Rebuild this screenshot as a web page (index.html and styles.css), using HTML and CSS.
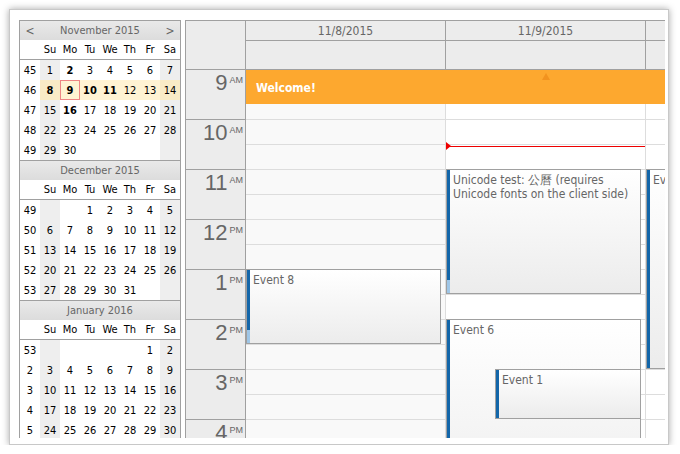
FILE: index.html
```html
<!DOCTYPE html>
<html>
<head>
<meta charset="utf-8">
<link rel="stylesheet" href="styles.css">
</head>
<body>
<div class="frame">
  <div class="viewport">
    <div class="nav">
      <div class="month">
        <div class="mhead"><span class="arrow">&lt;</span><span class="title">November 2015</span><span class="arrow">&gt;</span></div>
        <div class="dnames"><span></span><span>Su</span><span>Mo</span><span>Tu</span><span>We</span><span>Th</span><span>Fr</span><span>Sa</span></div>
        <div class="days">
          <span class="wk">45</span><span class="we">1</span><span class="b">2</span><span>3</span><span>4</span><span>5</span><span>6</span><span class="we">7</span>
          <span class="wk">46</span><span class="selwe b">8</span><span class="sel b today">9</span><span class="sel b">10</span><span class="sel b">11</span><span class="sel">12</span><span class="sel">13</span><span class="selwe">14</span>
          <span class="wk">47</span><span class="we">15</span><span class="b">16</span><span>17</span><span>18</span><span>19</span><span>20</span><span class="we">21</span>
          <span class="wk">48</span><span class="we">22</span><span>23</span><span>24</span><span>25</span><span>26</span><span>27</span><span class="we">28</span>
          <span class="wk">49</span><span class="we">29</span><span>30</span><span></span><span></span><span></span><span></span><span class="we"></span>
        </div>
      </div>
      <div class="month">
        <div class="mhead"><span class="arrow"></span><span class="title">December 2015</span><span class="arrow"></span></div>
        <div class="dnames"><span></span><span>Su</span><span>Mo</span><span>Tu</span><span>We</span><span>Th</span><span>Fr</span><span>Sa</span></div>
        <div class="days">
          <span class="wk">49</span><span class="we"></span><span></span><span>1</span><span>2</span><span>3</span><span>4</span><span class="we">5</span>
          <span class="wk">50</span><span class="we">6</span><span>7</span><span>8</span><span>9</span><span>10</span><span>11</span><span class="we">12</span>
          <span class="wk">51</span><span class="we">13</span><span>14</span><span>15</span><span>16</span><span>17</span><span>18</span><span class="we">19</span>
          <span class="wk">52</span><span class="we">20</span><span>21</span><span>22</span><span>23</span><span>24</span><span>25</span><span class="we">26</span>
          <span class="wk">53</span><span class="we">27</span><span>28</span><span>29</span><span>30</span><span>31</span><span></span><span class="we"></span>
        </div>
      </div>
      <div class="month">
        <div class="mhead"><span class="arrow"></span><span class="title">January 2016</span><span class="arrow"></span></div>
        <div class="dnames"><span></span><span>Su</span><span>Mo</span><span>Tu</span><span>We</span><span>Th</span><span>Fr</span><span>Sa</span></div>
        <div class="days">
          <span class="wk">53</span><span class="we"></span><span></span><span></span><span></span><span></span><span>1</span><span class="we">2</span>
          <span class="wk">2</span><span class="we">3</span><span>4</span><span>5</span><span>6</span><span>7</span><span>8</span><span class="we">9</span>
          <span class="wk">3</span><span class="we">10</span><span>11</span><span>12</span><span>13</span><span>14</span><span>15</span><span class="we">16</span>
          <span class="wk">4</span><span class="we">17</span><span>18</span><span>19</span><span>20</span><span>21</span><span>22</span><span class="we">23</span>
          <span class="wk">5</span><span class="we">24</span><span>25</span><span>26</span><span>27</span><span>28</span><span>29</span><span class="we">30</span>
        </div>
      </div>
    </div>

    <div class="cal">
      <div class="chead">
        <div class="corner"></div>
        <div class="dhead"><div class="date">11/8/2015</div><div class="allday"></div></div>
        <div class="dhead"><div class="date">11/9/2015</div><div class="allday"></div></div>
        <div class="dhead"><div class="date"></div><div class="allday"></div></div>
      </div>
      <div class="cbody">
        <div class="hours">
          <div class="hour"><span class="n">9</span><span class="ap">AM</span></div>
          <div class="hour"><span class="n">10</span><span class="ap">AM</span></div>
          <div class="hour"><span class="n">11</span><span class="ap">AM</span></div>
          <div class="hour"><span class="n">12</span><span class="ap">PM</span></div>
          <div class="hour"><span class="n">1</span><span class="ap">PM</span></div>
          <div class="hour"><span class="n">2</span><span class="ap">PM</span></div>
          <div class="hour"><span class="n">3</span><span class="ap">PM</span></div>
          <div class="hour"><span class="n">4</span><span class="ap">PM</span></div>
        </div>
        <div class="day nb">
          <div class="cell"></div><div class="cell"></div><div class="cell"></div><div class="cell"></div>
          <div class="cell"></div><div class="cell"></div><div class="cell"></div><div class="cell"></div>
          <div class="cell"></div><div class="cell"></div><div class="cell"></div><div class="cell"></div>
          <div class="cell"></div><div class="cell"></div><div class="cell"></div><div class="cell"></div>
          <div class="ev ev8"><div class="bar"><i style="height:61px"></i></div>Event 8</div>
        </div>
        <div class="day">
          <div class="cell"></div><div class="cell"></div><div class="cell"></div><div class="cell"></div>
          <div class="cell"></div><div class="cell"></div><div class="cell"></div><div class="cell"></div>
          <div class="cell"></div><div class="cell"></div><div class="cell"></div><div class="cell"></div>
          <div class="cell"></div><div class="cell"></div><div class="cell"></div><div class="cell"></div>
          <div class="now"></div>
          <div class="ev evu"><div class="bar"><i style="height:111px"></i></div>Unicode test: 公曆 (requires Unicode fonts on the client side)</div>
          <div class="ev ev6"><div class="bar"><i style="height:100%"></i></div>Event 6</div>
          <div class="ev ev1"><div class="bar"><i style="height:100%"></i></div>Event 1</div>
        </div>
        <div class="day">
          <div class="cell"></div><div class="cell"></div><div class="cell"></div><div class="cell"></div>
          <div class="cell"></div><div class="cell"></div><div class="cell"></div><div class="cell"></div>
          <div class="cell"></div><div class="cell"></div><div class="cell"></div><div class="cell"></div>
          <div class="cell"></div><div class="cell"></div><div class="cell"></div><div class="cell"></div>
          <div class="ev ev3"><div class="bar"><i style="height:100%"></i></div>Event 3</div>
        </div>
        <div class="welcome">Welcome!<span class="up"></span></div>
      </div>
    </div>
  </div>
</div>
</body>
</html>
```
FILE: styles.css
```css
* { box-sizing: border-box; }
body {
  margin: 0;
  background: #fff;
  font-family: "DejaVu Sans Condensed", "DejaVu Sans", sans-serif;
  font-stretch: condensed;
}
.frame {
  margin: 9px 0 0 9px;
  width: 660px;
  height: 436px;
  border: 1px solid #c8c8c8;
  padding: 10px 3px 6px 9px;
  background: #fff;
  box-shadow: 0 0 7px rgba(0,0,0,0.35);
}
.viewport {
  width: 646px;
  height: 418px;
  overflow: hidden;
  display: flex;
  align-items: flex-start;
  gap: 4px;
}

/* navigator */
.nav {
  flex: none;
  width: 162px;
  border-left: 1px solid #a0a0a0;
  border-right: 1px solid #a0a0a0;
  font-size: 11px;
  color: #000;
}
.month { border-top: 1px solid #a0a0a0; }
.mhead {
  height: 19px;
  display: flex;
  align-items: center;
  background: linear-gradient(#e9e9e9, #dcdcdc);
  color: #666;
}
.mhead .arrow { width: 20px; text-align: center; font-size: 12px; }
.mhead .title { flex: 1; text-align: center; }
.dnames, .days {
  display: grid;
  grid-template-columns: repeat(8, 20px);
}
.dnames {
  height: 20px;
  border-bottom: 1px solid #a0a0a0;
  background: #fff;
}
.dnames span, .days span {
  display: flex;
  align-items: center;
  justify-content: center;
  height: 19px;
}
.days { grid-auto-rows: 20px; }
.days span { height: 20px; }
.days .we { background: #eeeeee; }
.days .sel { background: #fff3d3; }
.days .selwe { background: #f9ebc6; }
.days .b { font-weight: bold; }
.days .today { box-shadow: inset 0 0 0 1px #ee8585; }

/* calendar */
.cal {
  flex: none;
  width: 661px;
  border-left: 1px solid #a0a0a0;
  border-top: 1px solid #a0a0a0;
}
.chead { display: flex; height: 49px; }
.corner {
  flex: none;
  width: 60px;
  background: #ececec;
  border-right: 1px solid #a0a0a0;
  border-bottom: 1px solid #a0a0a0;
}
.dhead {
  flex: none;
  width: 200px;
  display: flex;
  flex-direction: column;
  background: #ececec;
  border-right: 1px solid #a0a0a0;
}
.dhead .date {
  height: 20px;
  border-bottom: 1px solid #a0a0a0;
  display: flex;
  align-items: center;
  justify-content: center;
  font-size: 12px;
  color: #666;
}
.dhead .allday { height: 29px; border-bottom: 1px solid #a0a0a0; }

.cbody { display: flex; position: relative; }
.hours {
  flex: none;
  width: 60px;
  background: #ececec;
  border-right: 1px solid #a0a0a0;
}
.hour {
  height: 50px;
  border-bottom: 1px solid #a0a0a0;
  display: flex;
  justify-content: flex-end;
  align-items: flex-start;
  padding-right: 2px;
  color: #666;
  font-family: "Liberation Sans", sans-serif;
}
.hour .n { font-size: 22px; line-height: 25px; margin-right: 2px; }
.hour .ap { font-size: 9px; line-height: 10px; margin-top: 5px; }

.day {
  flex: none;
  width: 200px;
  position: relative;
  background: #fff;
  border-right: 1px solid #dddddd;
}
.day.nb { background: #f9f9f9; }
.cell { height: 25px; border-bottom: 1px solid #dddddd; }

.ev {
  position: absolute;
  border: 1px solid #a0a0a0;
  background: linear-gradient(#ffffff, #ececec);
  color: #666;
  font-size: 12px;
  line-height: 14px;
  padding: 3px 4px 0 6px;
  overflow: hidden;
}
.ev .bar {
  position: absolute;
  left: -1px;
  top: -1px;
  bottom: -1px;
  width: 4px;
  background: #9fc6e7;
}
.ev .bar i { display: block; background: #1366a9; }
.ev8 { left: 0; top: 199px; width: 195px; height: 75px; }
.evu { left: 0; top: 99px; width: 195px; height: 125px; }
.ev6 { left: 0; top: 249px; width: 195px; height: 200px; }
.ev1 { left: 49px; top: 299px; width: 146px; height: 50px; }
.ev3 { left: 0; top: 99px; width: 195px; height: 200px; }

.now {
  position: absolute;
  left: 0;
  right: 0;
  top: 76px;
  height: 2px;
  border-top: 1px solid #ee0000;
}
.now::before {
  content: "";
  position: absolute;
  left: 0;
  top: -5px;
  border-left: 5px solid #ee0000;
  border-top: 4px solid transparent;
  border-bottom: 4px solid transparent;
}

.welcome {
  position: absolute;
  left: 60px;
  top: 0;
  width: 600px;
  height: 34px;
  background: #fda82f;
  color: #fff;
  font-weight: bold;
  font-size: 12px;
  line-height: 14px;
  padding: 11px 0 0 10px;
}
.welcome .up {
  position: absolute;
  left: 296px;
  top: 3px;
  border-left: 4px solid transparent;
  border-right: 4px solid transparent;
  border-bottom: 7px solid #f2931f;
}
```
